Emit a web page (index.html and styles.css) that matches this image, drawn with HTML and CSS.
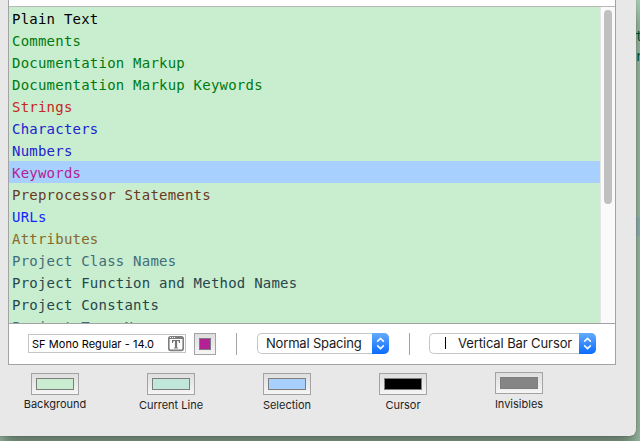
FILE: index.html
```html
<!DOCTYPE html>
<html lang="en">
<head>
<meta charset="utf-8">
<title>Fonts &amp; Colors</title>
<link rel="stylesheet" href="styles.css">
</head>
<body>
<div class="desktop">
  <div class="behind"><span>t</span><span>r</span><i class="behind-line"></i></div>
  <main class="window">
    <section class="panel">
      <div class="head"></div>
      <div class="list">
        <ul class="rows">
          <li class="plain">Plain Text</li>
          <li class="comment">Comments</li>
          <li class="comment">Documentation Markup</li>
          <li class="comment">Documentation Markup Keywords</li>
          <li class="string">Strings</li>
          <li class="number">Characters</li>
          <li class="number">Numbers</li>
          <li class="keyword selected">Keywords</li>
          <li class="preproc">Preprocessor Statements</li>
          <li class="url">URLs</li>
          <li class="attribute">Attributes</li>
          <li class="class">Project Class Names</li>
          <li class="method">Project Function and Method Names</li>
          <li class="method">Project Constants</li>
          <li class="class">Project Type Names</li>
        </ul>
        <div class="scroller"><div class="thumb"></div></div>
      </div>
      <div class="toolbar">
        <div class="font-field">
          <span class="font-name">SF Mono Regular - 14.0</span>
          <svg class="font-icon" width="16" height="16" viewBox="0 0 16 16">
            <rect x=".8" y=".8" width="14.4" height="13.600" rx="1.800" fill="#fff" stroke="#7d7d7d" stroke-width="1.600"/>
            <path d="M1 1h14v2H1z" fill="#7d7d7d"/>
            <path d="M2 1h1v1H2zM4 1h1v1H4zM6 1h1v1H6z" fill="#fff"/>
            <path d="M4 4h8v3h-1c-.2-1.300-.5-1.900-1.300-1.900H9.100v5.800c0 .6.200.8 1 .9v.7H5.900v-.7c.8-.1 1-.3 1-.9V5.100h-.6C5.500 5.100 5.200 5.700 5 7H4z" fill="#757575"/>
          </svg>
        </div>
        <div class="well square"><i class="fill-keyword"></i></div>
        <div class="divider first"></div>
        <div class="popup spacing">
          <span class="label">Normal Spacing</span>
          <span class="arrows"><svg width="17" height="21" viewBox="0 0 17 21"><path d="M5.200 8.600 8.500 5.400l3.300 3.200M5.200 12.400l3.300 3.200 3.300-3.200" fill="none" stroke="#fff" stroke-width="1.500"/></svg></span>
        </div>
        <div class="divider second"></div>
        <div class="popup cursor">
          <i class="bar"></i>
          <span class="label">Vertical Bar Cursor</span>
          <span class="arrows"><svg width="17" height="21" viewBox="0 0 17 21"><path d="M5.200 8.600 8.500 5.400l3.300 3.200M5.200 12.400l3.300 3.200 3.300-3.200" fill="none" stroke="#fff" stroke-width="1.500"/></svg></span>
        </div>
      </div>
    </section>
    <section class="swatches">
      <div class="swatch"><div class="well"><i class="fill-background"></i></div><span>Background</span></div>
      <div class="swatch low"><div class="well"><i class="fill-line"></i></div><span>Current Line</span></div>
      <div class="swatch low"><div class="well"><i class="fill-selection"></i></div><span>Selection</span></div>
      <div class="swatch low"><div class="well"><i class="fill-cursor"></i></div><span>Cursor</span></div>
      <div class="swatch high"><div class="well"><i class="fill-invisibles"></i></div><span>Invisibles</span></div>
    </section>
  </main>
</div>
</body>
</html>
```

FILE: styles.css
```css
* { box-sizing: border-box; }
body { margin: 0; font-family: Inter, "Liberation Sans", sans-serif; }
.desktop {
  position: relative;
  width: 640px;
  height: 441px;
  overflow: hidden;
  background: #a6c9af;
}
.behind {
  position: absolute;
  left: 635px;
  top: 26px;
  display: flex;
  flex-direction: column;
  font: 14px/20px "DejaVu Sans Mono", monospace;
  color: #005f30;
}
.behind-line {
  width: 5px;
  height: 19px;
  margin-top: 151px;
  background: #9cbfbc;
}
.window {
  position: relative;
  width: 636px;
  height: 436px;
  background: #e8e8e8;
  border-radius: 0 0 6px 0;
  box-shadow: 0 0 1px rgba(0, 0, 0, .6), 0 12px 18px rgba(0, 0, 0, .45);
}
.panel {
  width: 608px;
  height: 365px;
  margin-left: 8px;
  border: 1px solid #a3a3a3;
  border-top: 0;
  background: #fff;
}
.head { height: 7px; border-bottom: 1px solid #b8b8b8; }
.list {
  display: flex;
  height: 317px;
  overflow: hidden;
  border-bottom: 1px solid #a3a3a3;
}
.rows {
  width: 591px;
  margin: 0;
  padding: 0;
  list-style: none;
  background: #c9edcf;
  font: 14px/22px "DejaVu Sans Mono", monospace;
  letter-spacing: .22px;
}
.rows li { height: 22px; padding: 1px 0 0 3px; white-space: nowrap; }
.rows .selected { background: #a7d0ff; }
.plain { color: #000; }
.comment { color: #007a10; }
.string { color: #c7251d; }
.number { color: #2023cf; }
.keyword { color: #b42193; }
.preproc { color: #68391f; }
.url { color: #1425ff; }
.attribute { color: #876929; }
.class { color: #3f6e78; }
.method { color: #25474b; }
.scroller {
  width: 15px;
  padding: 3px 0 0 3px;
  border-left: 1px solid #e5e5e5;
  background: #fafafa;
}
.thumb { width: 8px; height: 194px; border-radius: 4px; background: #c0c0c0; }
.toolbar { display: flex; align-items: flex-start; height: 40px; padding-left: 19px; }
.font-field {
  display: flex;
  width: 158px;
  height: 19px;
  margin-top: 10px;
  padding: 0 1px 0 3px;
  border: 1px solid #c5c5c5;
}
.font-name {
  width: 136px;
  font-size: 11px;
  line-height: 18px;
  letter-spacing: .04px;
  white-space: nowrap;
}
.font-icon { margin-top: 1px; }
.well {
  display: flex;
  width: 48px;
  height: 22px;
  padding: 4px;
  border: 1px solid #a3a3a3;
  background: linear-gradient(#dedede, #f5f5f5);
}
.well i { flex: 1; border: 1px solid #7d7d7d; }
.square { width: 22px; margin: 9px 0 0 8px; }
.fill-keyword { background: #b22295; }
.fill-background { background: #c9edcf; }
.fill-line { background: #c1e6da; }
.fill-selection { background: #a7d0ff; }
.fill-cursor { background: #000; }
.fill-invisibles { background: #858585; }
.divider { width: 1px; height: 22px; margin-top: 9px; background: #a3a3a3; }
.first { margin-left: 20px; }
.second { margin-left: 20px; }
.popup {
  display: flex;
  height: 21px;
  margin-top: 9px;
  border: 1px solid #c6c6c6;
  border-right: 0;
  border-radius: 5px;
  font-size: 13px;
  line-height: 19px;
  letter-spacing: -.18px;
  color: #1a1a1a;
}
.spacing { width: 132px; margin-left: 20px; padding-left: 8px; }
.cursor { width: 167px; margin-left: 19px; padding-left: 15px; }
.label { flex: 1; white-space: nowrap; }
.cursor .label { letter-spacing: -.1px; }
.bar { width: 1px; height: 12px; margin: 3px 12px 0 0; background: #000; }
.arrows {
  width: 17px;
  height: 21px;
  margin-top: -1px;
  border-radius: 0 5px 5px 0;
  background: linear-gradient(#64abfb, #0a6bff);
}
.arrows svg { display: block; }
.swatches { display: flex; gap: 36px; padding: 8px 0 0 15px; }
.swatch {
  display: flex;
  flex-direction: column;
  align-items: center;
  width: 80px;
  font-size: 11px;
  line-height: 14px;
  color: #1e1e1e;
}
.swatch span { margin-top: 2px; white-space: nowrap; }
.low span { margin-top: 3px; }
.high span { margin-top: 3px; }
.high { margin-top: -1px; }
```
